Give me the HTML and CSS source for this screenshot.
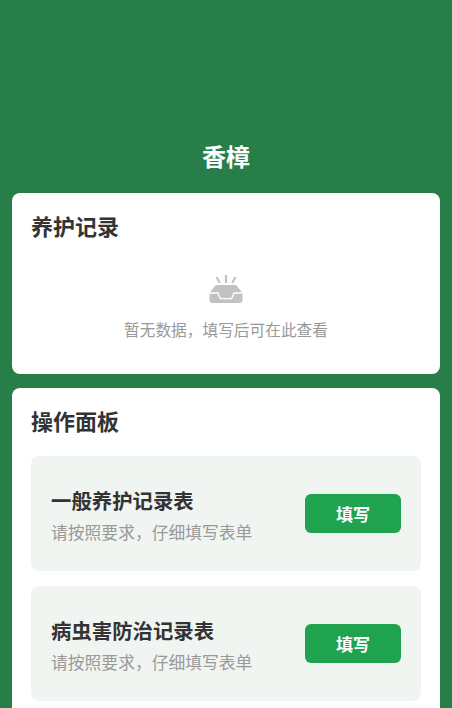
FILE: index.html
```html
<!DOCTYPE html>
<html lang="zh-CN">

<head>
  <meta charset="UTF-8">
  <title>香樟</title>
  <link rel="stylesheet" href="styles.css">
</head>

<body>
  <!-- 标题 -->
  <header class="page-header">
    <h1>香樟</h1>
  </header>

  <!-- 养护记录 -->
  <section class="card">
    <h2 class="card-title">养护记录</h2>
    <div class="empty">
      <svg class="empty-icon" viewBox="0 0 34 29" width="34" height="29">
        <path d="M15.9 0h2.2v8h-2.2zM6.6 2.6l1.8-1.1 3.4 5.9-1.8 1.1zM27.4 2.6l-1.8-1.1-3.4 5.9 1.8 1.1z" fill="#c2c2c2"/>
        <path d="M8 10H26q1.5 0 2 1L33.5 18V25q0 3-3 3H3.5q-3 0-3-3V18L6 11q.5-1 2-1z" fill="#c2c2c2"/>
        <path d="M.5 18H9L11 23q.5.6 1.5.6H21.5q1 0 1.500-.6L25 18H33.500" fill="none" stroke="white" stroke-width="1.300"/>
      </svg>
      <p class="empty-text">暂无数据，填写后可在此查看</p>
    </div>
  </section>

  <!-- 操作面板 -->
  <section class="card">
    <h2 class="card-title">操作面板</h2>
    <div class="form-item">
      <div class="form-info">
        <div class="form-name">一般养护记录表</div>
        <div class="form-desc">请按照要求，仔细填写表单</div>
      </div>
      <button class="btn-fill">填写</button>
    </div>
    <div class="form-item">
      <div class="form-info">
        <div class="form-name">病虫害防治记录表</div>
        <div class="form-desc">请按照要求，仔细填写表单</div>
      </div>
      <button class="btn-fill">填写</button>
    </div>
  </section>
</body>

</html>
```

FILE: styles.css
```css
/* 页面基础 */
html,
body {
  margin: 0;
  padding: 0;
  height: 708px;
  overflow: hidden;
  font-family: "Noto Sans CJK SC", "Liberation Sans", sans-serif;
  background-color: #277e48;
}

body {
  padding: 0 12px;
  box-sizing: border-box;
}

/* 标题 */
.page-header {
  padding-top: 138px;
  height: 55px;
  text-align: center;
}

.page-header h1 {
  margin: 0;
  font-size: 24px;
  line-height: 36px;
  font-weight: 700;
  color: white;
}

/* 卡片 */
.card {
  background-color: white;
  border-radius: 8px;
  padding: 16px 19px 15px;
  margin-bottom: 14px;
}

.card-title {
  margin: 0;
  font-size: 22px;
  line-height: 32px;
  font-weight: 700;
  color: #333;
}

/* 空状态 */
.empty {
  display: flex;
  flex-direction: column;
  align-items: center;
  padding: 34px 0 17px;
}

.empty-icon {
  display: block;
}

.empty-text {
  margin: 14px 0 0;
  font-size: 15.7px;
  line-height: 24px;
  color: #999;
}

/* 表单项 */
.form-item {
  display: flex;
  justify-content: space-between;
  align-items: center;
  height: 115px;
  margin-top: 15px;
  padding: 0 20px;
  background-color: #f0f5f2;
  border-radius: 8px;
}

.card-title + .form-item {
  margin-top: 20px;
}

.form-info {
  padding-top: 3px;
}

.form-name {
  font-size: 20.4px;
  line-height: 30px;
  font-weight: 700;
  color: #333;
}

.form-desc {
  margin-top: 4px;
  font-size: 16.8px;
  line-height: 26px;
  color: #999;
}

/* 填写按钮 */
.btn-fill {
  width: 96px;
  height: 39px;
  border: none;
  border-radius: 6px;
  background-color: #1fa34f;
  color: white;
  font-family: inherit;
  font-size: 17px;
  font-weight: 700;
  cursor: pointer;
}
```
